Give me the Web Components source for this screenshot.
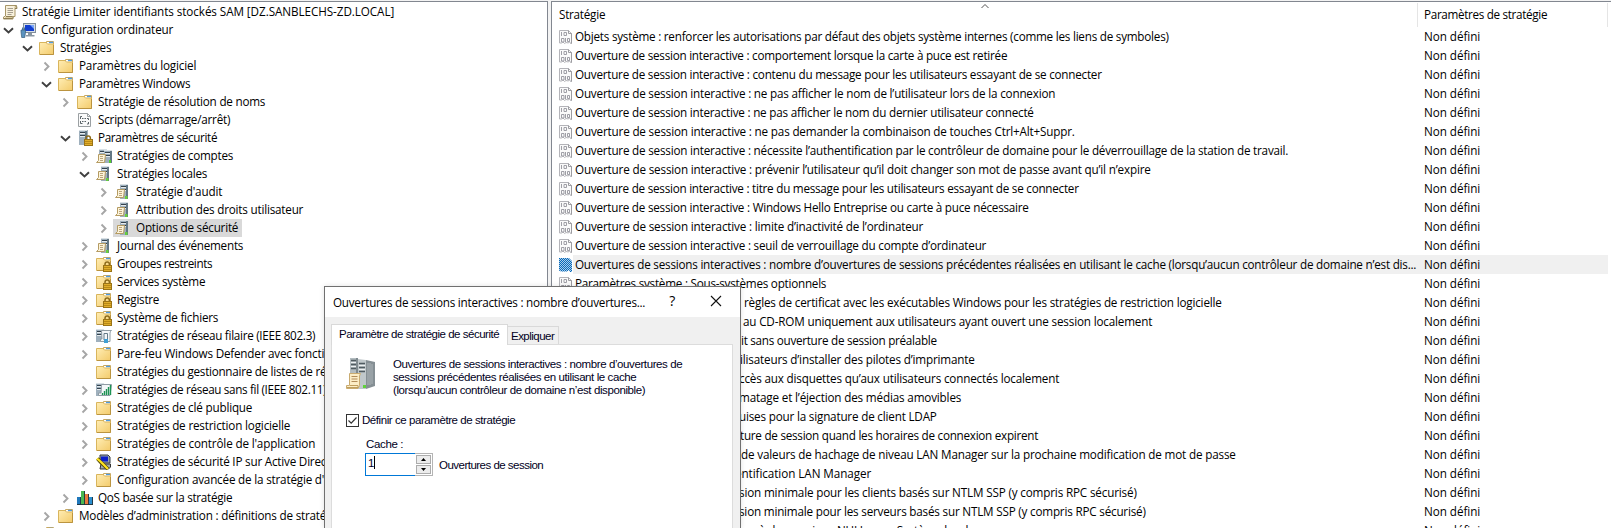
<!DOCTYPE html>
<html lang="fr">
<head>
<meta charset="utf-8">
<title>Éditeur de gestion des stratégies de groupe</title>
<style>
html,body{margin:0;height:100%;overflow:hidden;background:#f3f3f3}
body{font:11.7px/18px "Open Sans","Noto Sans",sans-serif;color:#000}
</style>
</head>
<body>
<policy-editor></policy-editor>
<script>
const folder = `<path d="M7.5 3.5V1.5H14.5V5" fill="#fff" stroke="#c9a860"/><path d="M10 2.5h4" stroke="#4f9be0" stroke-width="1.4"/><path d="M.5 2.5H7l1.5 1.5H14.5V14.5H.5Z" fill="url(#fg)" stroke="#d9b55c"/><path d="M1 14.5H14.5V5" fill="none" stroke="#bb9440"/>`;
const server = (x, y, h) => `<rect x="${x}" y="${y}" width="8" height="${h}" fill="#9fb0bd"/><rect x="${x + 6}" y="${y}" width="2" height="${h}" fill="#627784"/><path d="M${x} ${y + .5}h8" stroke="#d8e0e5"/><path d="M${x + 1} ${y + 2.5}h5M${x + 1} ${y + 5.5}h5" stroke="#34424d"/><path d="M${x + 1} ${y + 3.5}h5M${x + 1} ${y + 6.5}h5" stroke="#e6ecef"/>`;
const scroll = (x, y) => `<path d="M${x + 2.5} ${y + .5}H${x + 9.5}L${x + 8.5} ${y + 8.5}H${x + .5}L${x + 2.5} ${y + 6.5}Z" fill="#fbf3d9" stroke="#b59b62"/><path d="M${x + 4} ${y + 2.5}h3M${x + 4} ${y + 4.5}h3M${x + 4} ${y + 6.5}h3" stroke="#a98f65" stroke-width=".8"/>`;
const lock = `<path d="M9 10V8.2a2 2 0 0 1 4.4 0V10" fill="none" stroke="#8c6b1c" stroke-width="1.5"/><rect x="7.5" y="9.5" width="8" height="6" fill="#e0ae2c" stroke="#9a7316"/><path d="M8 11.5h7M8 13.5h7" stroke="#b98916"/>`;
const ICONS = {
  folder,
  locked: folder + lock,
  root: `<path d="M3.5 1.5H14.5Q13 2.5 13 4.5V12.5H11V15H1.5Q.5 12.5 3.5 12V3Z" fill="#f8f1dc" stroke="#a89668"/><path d="M12.5 1.5Q15.5 1.5 15 4.5H13M2 14.5H10.5Q11.5 14 10.5 12.5H4" fill="#dccc9e" stroke="#8f7f55"/><path d="M5.5 4.5h5.5M5.5 6.5h5.5M5.5 8.5h5.5M5.5 10.5h4" stroke="#a69f90"/>`,
  computer: `<rect x="3.5" y="1.5" width="12" height="9" fill="#d5dde5" stroke="#818d99"/><rect x="5" y="3" width="9" height="6" fill="#123fd0"/><path d="M10 3h4v4Z" fill="#7aa5f8"/><path d="M8 11h4v2h2.5v1.5H6V13h2Z" fill="#8996a2"/><path d="M2.5 5.5v4M4.5 5.5v3" stroke="#47769c"/><path d="M1 8h4.5v2L4.8 15.5H1.7L1 10Z" fill="#5b93bf" stroke="#385c7b" stroke-width=".7"/>`,
  script: `<path d="M1.5 1.5H10.5L13.5 4.5V14.5H1.5Z" fill="#fafafa" stroke="#9ba0a3"/><path d="M10.5 1.5V4.5H13.5" fill="none" stroke="#9ba0a3"/><path d="M5 4.5H3.5V7M10 6.5h1.5V8M3.5 9v2.500h2M11.500 10v2H10" fill="none" stroke="#596267"/><path d="M5 6.500h4M5 9.500h5" stroke="#596267" stroke-dasharray="1.5 1"/>`,
  security: server(2, 0, 15).replaceAll('width="8"', 'width="9"') + lock,
  accounts: server(3, 1, 12) + server(8, 2, 13) + scroll(0, 6) + `<rect x="13" y="12" width="2" height="3" fill="#55cf2e"/>`,
  policy: server(5, 0, 15) + scroll(0, 5) + `<rect x="10" y="12" width="2.500" height="3" fill="#67ce3e"/>`,
  wired: server(0, 1, 13) + `<path d="M5.500 2.500H15.500Q14 3.500 14 5V13.500H4.500V11H6Z" fill="#f4f7f9" stroke="#8f9ca4"/><path d="M8 12V5.500h3.500V11" fill="none" stroke="#657b89"/><rect x="8" y="11" width="4" height="4" fill="#3f9fd4"/>`,
  wireless: server(0, 1, 13) + `<path d="M5.500 2.500H15.500L14 13.500H2.500V11H5Z" fill="#f4f7f9" stroke="#8f9ca4"/><path d="M6.500 13v-2M8.500 13V9M10.500 13V7M12.500 13V5M14.500 13V3" stroke="#1e9354" stroke-width="1.400"/>`,
  ipsec: `<path d="M4 1H12L14 3V9H4Z" fill="#98a4ae" stroke="#343c44"/><rect x="5" y="2.500" width="7" height="5" fill="#0b1fc9"/><path d="M5 10h9.500v3l-2 2H4Z" fill="#9fa8b0" stroke="#333"/><path d="M1.500 4.500 4.500 8 12 15" fill="none" stroke="#534600" stroke-width="3.600"/><path d="M1 4.500 4.500 7.500 12 15" fill="none" stroke="#ffe524" stroke-width="2.200"/>`,
  qos: `<path d="M0 7h4v8H0Z" fill="#2078bb"/><path d="M4 1h4v14H4Z" fill="#49b950"/><path d="M8 4h4v11H8Z" fill="#e97a3d"/><path d="M12 7h4v8h-4Z" fill="#2a8fd0"/><path d="M3.500 7v8M7.500 1v14M11.500 4v11M15.500 7v8M0 14.500h16" stroke="#22313a" stroke-width=".9"/>`,
  binary: `<path d="M1.500 1.500H10.500L13.500 4.500V14.500H12.500L11.500 12.500 10.500 14 8 13.500 6.500 14.500 5 13 3.500 14H1.500Z" fill="#fafafa" stroke="#b4b4b9"/><path d="M10.500 1.500V4.500H13.500V14.500" fill="none" stroke="#9c9ca1"/><path d="M3.500 3v4M3.500 9.500H6v3.500H3.500ZM6 3.500h2.500V6.500H6ZM7.500 9v4M9.500 9.500H11.500v3H9.500Z" fill="none" stroke="#9f9fa6"/>`,
  binarySelected: `<path d="M1 1H11L14 4V15H12L11 13 9 14.500H3L1 13.500Z" fill="url(#dots)"/>`,
  large: `<g><path d="M20 3 29 5V29L20 32Z" fill="#858f94"/><path d="M22 6v22M24 6v22M26 7v20" stroke="#adb5b9"/><path d="M12 2 20 3V32H12Z" fill="#c0c8cb"/><path d="M13 6.500h6M13 10.500h6M13 14.500h6" stroke="#4f5b61" stroke-width="1.500"/><path d="M13 8.500h6M13 12.500h6" stroke="#edf1f3"/><path d="M4 1H12V22H4Z" fill="#b3bcc0"/><path d="M10 1h2v22h-2Z" fill="#7f8a8f"/><path d="M5 3.500h5M5 7.500h5M5 11.500h5" stroke="#4f5b61" stroke-width="1.500"/><path d="M5 5.500h5M5 9.500h5" stroke="#edf1f3"/><rect x="17" y="28" width="3" height="3" fill="#5fd23a"/><path d="M3.500 16.500H14.500L13.500 19V28.500L12 31.500H.500V28.500H3.500Z" fill="#fcedc6" stroke="#c9ab70"/><path d="M5.500 19.500h6M5.500 22h6M5.500 24.500h6" stroke="#b28c5a"/><path d="M1 30.500H12V28.500H4" fill="none" stroke="#bf9e5e"/></g>`
};

class GlyphIcon extends HTMLElement {
  connectedCallback() {
    const s = +this.getAttribute('size') || 16;
    this.attachShadow({mode: 'open'}).innerHTML = `<style>:host{display:block;flex:none;width:${s}px;height:${s}px}svg{display:block}</style>
      <svg width="${s}" height="${s}" viewBox="0 0 ${s} ${s}"><defs><linearGradient id="fg" x1="0" y1="0" x2="1" y2="1"><stop offset="0" stop-color="#ffedb4"/><stop offset="1" stop-color="#f3cb6b"/></linearGradient><pattern id="dots" width="2" height="2" patternUnits="userSpaceOnUse"><rect width="2" height="2" fill="#a9cdea"/><path d="M0 0h1v1H0ZM1 1h1v1H1Z" fill="#0868b8"/></pattern></defs>${ICONS[this.getAttribute('name')]}</svg>`;
  }
}
customElements.define('glyph-icon', GlyphIcon);

/* Single-line label whose tracking is adjusted to fill the given width. */
class FitText extends HTMLElement {
  connectedCallback() {
    const root = this.attachShadow({mode: 'open'});
    root.innerHTML = `<style>:host{display:block;flex:none;white-space:pre}span{display:inline-block;vertical-align:top}</style><span><slot></slot></span>`;
    const span = root.querySelector('span'), w = +this.getAttribute('w'), n = this.textContent.length;
    if (w && n) span.style.letterSpacing = ((w + .2 - span.getBoundingClientRect().width) / n).toFixed(4) + 'px';
  }
}
customElements.define('fit-text', FitText);

class TreeItem extends HTMLElement {
  connectedCallback() {
    const level = +this.getAttribute('level'), state = this.getAttribute('state'), sel = this.hasAttribute('selected');
    const pad = level ? (level - 1) * 19 + 1 : 0;
    const chev = state === 'open' ? '<path d="M3 7.200 7.500 11.500 12 7.200" stroke="#404040"/>' : state === 'closed' ? '<path d="M5.500 5.500 9.500 9.500 5.500 13.500" stroke="#a6a6a6"/>' : '';
    this.attachShadow({mode: 'open'}).innerHTML = `<style>
      :host{display:flex;height:18px;align-items:center;padding-left:${pad}px;flex:none}
      .chev{width:${level ? 17 : 0}px;height:18px;flex:none}.chev path{fill:none;stroke-width:1.9}
      .node{display:flex;height:18px;align-items:center;gap:${level ? 5 : 4}px;padding:0 4px 0 2px;${sel ? 'background:#d9d9d9;' : ''}}
      fit-text{height:18px;line-height:17px}
      </style><svg class="chev">${chev}</svg><div class="node"><glyph-icon name="${this.getAttribute('icon')}"></glyph-icon><fit-text w="${this.getAttribute('w')}">${this.getAttribute('label')}</fit-text></div>`;
  }
}
customElements.define('tree-item', TreeItem);

class PolicyTree extends HTMLElement {
  connectedCallback() {
    const rows = [
      [0,'','root','Stratégie Limiter identifiants stockés SAM [DZ.SANBLECHS-ZD.LOCAL]',372],
      [1,'open','computer','Configuration ordinateur',132],
      [2,'open','folder','Stratégies',51],
      [3,'closed','folder','Paramètres du logiciel',117],
      [3,'open','folder','Paramètres Windows',111],
      [4,'closed','folder','Stratégie de résolution de noms',167],
      [4,'','script','Scripts (démarrage/arrêt)',132],
      [4,'open','security','Paramètres de sécurité',119],
      [5,'closed','accounts','Stratégies de comptes',116],
      [5,'open','policy','Stratégies locales',90],
      [6,'closed','policy',"Stratégie d'audit",86],
      [6,'closed','policy','Attribution des droits utilisateur',167],
      [6,'closed','policy','Options de sécurité',102],
      [5,'closed','policy','Journal des événements',126],
      [5,'closed','locked','Groupes restreints',95],
      [5,'closed','locked','Services système',88],
      [5,'closed','locked','Registre',42],
      [5,'closed','locked','Système de fichiers',101],
      [5,'closed','wired','Stratégies de réseau filaire (IEEE 802.3)',198],
      [5,'closed','folder','Pare-feu Windows Defender avec foncti',207],
      [5,'','folder','Stratégies du gestionnaire de listes de ré',209],
      [5,'closed','wireless','Stratégies de réseau sans fil (IEEE 802.11)',209],
      [5,'closed','folder','Stratégies de clé publique',135],
      [5,'closed','folder','Stratégies de restriction logicielle',173],
      [5,'closed','folder',"Stratégies de contrôle de l'application",198],
      [5,'closed','ipsec','Stratégies de sécurité IP sur Active Direc',209],
      [5,'closed','folder',"Configuration avancée de la stratégie d'",207],
      [4,'closed','qos','QoS basée sur la stratégie',134],
      [3,'closed','folder','Modèles d’administration : définitions de straté',247],
      [2,'','folder','',0]
    ];
    this.attachShadow({mode: 'open'}).innerHTML = `<style>:host{display:flex;flex-direction:column;overflow:hidden;background:#fff;border:solid #828790;border-width:1px 1px 0 0;padding-top:1px;box-sizing:border-box}</style>` +
      rows.map(([l,s,i,t,w], n) => `<tree-item level="${l}" state="${s}" icon="${i}" label="${t}" w="${w}"${n === 12 ? ' selected' : ''}></tree-item>`).join('');
  }
}
customElements.define('policy-tree', PolicyTree);

class PolicyList extends HTMLElement {
  connectedCallback() {
    const o = 'Ouverture de session interactive : ';
    const rows = [
      [575,'Objets système : renforcer les autorisations par défaut des objets système internes (comme les liens de symboles)',1168.5],
      [575,o+'comportement lorsque la carte à puce est retirée',1007],
      [575,o+'contenu du message pour les utilisateurs essayant de se connecter',1101.5],
      [575,o+'ne pas afficher le nom de l’utilisateur lors de la connexion',1055],
      [575,o+'ne pas afficher le nom du dernier utilisateur connecté',1033.5],
      [575,o+'ne pas demander la combinaison de touches Ctrl+Alt+Suppr.',1074.5],
      [575,o+'nécessite l’authentification par le contrôleur de domaine pour le déverrouillage de la station de travail.',1288],
      [575,o+'prévenir l’utilisateur qu’il doit changer son mot de passe avant qu’il n’expire',1150.5],
      [575,o+'titre du message pour les utilisateurs essayant de se connecter',1078.5],
      [575,o+'Windows Hello Entreprise ou carte à puce nécessaire',1028.5],
      [575,o+'limite d’inactivité de l’ordinateur',923],
      [575,o+'seuil de verrouillage du compte d’ordinateur',986],
      [575,'Ouvertures de sessions interactives : nombre d’ouvertures de sessions précédentes réalisées en utilisant le cache (lorsqu’aucun contrôleur de domaine n’est dis...',1416],
      [575,'Paramètres système : Sous-systèmes optionnels',826],
      [744,'règles de certificat avec les exécutables Windows pour les stratégies de restriction logicielle',1221.5],
      [743,'au CD-ROM uniquement aux utilisateurs ayant ouvert une session localement',1152],
      [741,'it sans ouverture de session préalable',936.5],
      [740,'ilisateurs d’installer des pilotes d’imprimante',974.5],
      [739,'ccès aux disquettes qu’aux utilisateurs connectés localement',1059],
      [739,'matage et l’éjection des médias amovibles',961],
      [739,'uises pour la signature de client LDAP',936.5],
      [740,'ture de session quand les horaires de connexion expirent',1038],
      [741,'de valeurs de hachage de niveau LAN Manager sur la prochaine modification de mot de passe',1235.5],
      [735,'entification LAN Manager',871],
      [739,'sion minimale pour les clients basés sur NTLM SSP (y compris RPC sécurisé)',1136.5],
      [739,'sion minimale pour les serveurs basés sur NTLM SSP (y compris RPC sécurisé)',1145.5],
      [759,'à des sessions NULL pour Système local',968]
    ];
    this.attachShadow({mode: 'open'}).innerHTML = `<style>
      :host{display:flex;flex-direction:column;overflow:hidden;background:#fff;border:solid #828790;border-width:1px 0 0 1px;box-sizing:border-box}
      .head,.row{display:grid;grid-template-columns:865px 190px;flex:none}
      .head{height:25px;line-height:25px;background:linear-gradient(#e5e5e5,#e5e5e5) 865px 1px/1px 24px no-repeat,linear-gradient(#e5e5e5,#e5e5e5) 1055px 1px/1px 24px no-repeat}
      .head>div{display:flex;padding-left:7px}
      .sort{display:block;width:8px;height:6px;margin:1px 0 0 376px}
      .row{height:19px;line-height:19px}
      .name{display:flex;align-items:center}
      .row glyph-icon{margin:0 1px 0 6px}
      .sel{background:linear-gradient(#f0f0f0,#f0f0f0) 21px 0/1035px 19px no-repeat}
      .val{padding-left:7px}
      </style>
      <div class="head"><div><fit-text w="46">Stratégie</fit-text><svg class="sort"><path d="M.500 5 4 1.500 7.500 5" fill="none" stroke="#555"/></svg></div><div><fit-text w="123">Paramètres de stratégie</fit-text></div></div>` +
      rows.map(([x,t,e], n) => `<div class="row${n === 12 ? ' sel' : ''}"><div class="name"${x > 575 ? ` style="padding-left:${x - 552}px"` : ''}>${x > 575 ? '' : `<glyph-icon name="${n === 12 ? 'binarySelected' : 'binary'}"></glyph-icon>`}<fit-text w="${e - x}">${t}</fit-text></div><div class="val"><fit-text w="56">Non défini</fit-text></div></div>`).join('');
  }
}
customElements.define('policy-list', PolicyList);

class TabPage extends HTMLElement {
  connectedCallback() {
    this.attachShadow({mode: 'open'}).innerHTML = `<style>
      :host{display:flex;flex-direction:column;height:204px}
      .tabs{display:flex;align-items:flex-end;height:20px;line-height:18px}
      .tab{box-sizing:border-box;border:1px solid #d9d9d9;border-bottom:0;height:18px;padding:0 3px;width:52px;margin-left:-1px}
      .tab.on{height:21px;width:177px;background:#fff;margin:0 0 -1px;position:relative;padding:0 0 0 7px}
      .page{flex:1;border:1px solid #dcdcdc;border-bottom:0;background:#fff;padding-left:14px}
      </style><div class="tabs"><div class="tab on"><fit-text w="160">Paramètre de stratégie de sécurité</fit-text></div><div class="tab"><fit-text w="43">Expliquer</fit-text></div></div><div class="page"><slot></slot></div>`;
  }
}
customElements.define('tab-page', TabPage);

class NumberSpinner extends HTMLElement {
  connectedCallback() {
    this.attachShadow({mode: 'open'}).innerHTML = `<style>
      :host{display:flex;width:68px;height:23px}
      .in{box-sizing:border-box;width:50px;border:1px solid #0078d7;border-right:0;display:flex;padding:2px 0 0 2px;line-height:14px}
      .in i{width:1px;height:13px;background:#000}
      .sp{box-sizing:border-box;width:18px;border:1px solid #b4b4b4;border-left:0;padding:1px;display:flex;flex-direction:column;gap:1px}
      .sp div{box-sizing:border-box;flex:1;border:1px solid #acacac;background:#ececec;display:flex;align-items:center;justify-content:center}
      svg{display:block}
      </style><div class="in"><slot></slot><i></i></div><div class="sp"><div><svg width="5" height="3"><path d="M0 3 2.500 0 5 3Z"/></svg></div><div><svg width="5" height="3"><path d="M0 0 2.500 3 5 0Z"/></svg></div></div>`;
  }
}
customElements.define('number-spinner', NumberSpinner);

class PolicyDialog extends HTMLElement {
  connectedCallback() {
    this.attachShadow({mode: 'open'}).innerHTML = `<style>
      :host{display:block;box-sizing:border-box;border:1px solid #707070;border-bottom:0;background:#f0f0f0;box-shadow:0 0 5px rgba(0,0,0,.12)}
      header{display:flex;height:30px;background:#fff;line-height:30px;padding-left:8px}
      .q{font-size:14px;font-weight:500;width:10px;margin-left:24px;line-height:28px}
      .x{width:12px;height:12px;margin:8px 0 0 31px}
      tab-page{margin:7px 7px 0 6px;font:11.500px/13px "Liberation Sans",Arial,sans-serif;color:#00001c}
      .intro{display:flex;padding:12px 0 0;gap:15px}
      .lines{padding-top:1px}
      .check{display:flex;align-items:center;gap:3px;height:14px;margin-top:16px}
      .box{width:11px;height:11px;border:1px solid #333}
      .box svg{display:block}
      .cache{margin:11px 0 2px 20px}
      .field{display:flex;gap:6px;margin-left:19px}
      .field fit-text{padding-top:6px}
      </style>
      <header><fit-text w="312">Ouvertures de sessions interactives : nombre d’ouvertures...</fit-text><span class="q">?</span><svg class="x"><path d="M1 1 11 11M11 1 1 11" stroke="#111" stroke-width="1.100"/></svg></header>
      <tab-page>
        <div class="intro"><glyph-icon name="large" size="32"></glyph-icon><div class="lines"><fit-text w="289">Ouvertures de sessions interactives : nombre d’ouvertures de</fit-text><fit-text w="243">sessions précédentes réalisées en utilisant le cache</fit-text><fit-text w="252">(lorsqu’aucun contrôleur de domaine n’est disponible)</fit-text></div></div>
        <div class="check"><div class="box"><svg width="11" height="11"><path d="M1.500 5.500 4.200 8.200 9.500 2.500" fill="none" stroke="#333" stroke-width="1.200"/></svg></div><fit-text w="153">Définir ce paramètre de stratégie</fit-text></div>
        <div class="cache"><fit-text w="37">Cache :</fit-text></div>
        <div class="field"><number-spinner>1</number-spinner><fit-text w="104">Ouvertures de session</fit-text></div>
      </tab-page>`;
  }
}
customElements.define('policy-dialog', PolicyDialog);

class PolicyEditor extends HTMLElement {
  connectedCallback() {
    this.attachShadow({mode: 'open'}).innerHTML = `<style>
      :host{display:grid;grid-template-columns:548px 1fr;column-gap:3px;height:527px;padding-top:1px;overflow:hidden;position:relative}
      policy-dialog{position:absolute;left:324px;top:286px;width:417px;height:242px}
      </style><policy-tree></policy-tree><policy-list></policy-list><policy-dialog></policy-dialog>`;
  }
}
customElements.define('policy-editor', PolicyEditor);
</script>
</body>
</html>
